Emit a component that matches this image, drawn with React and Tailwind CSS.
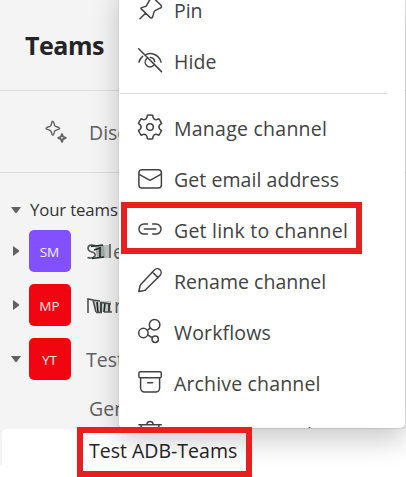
import React from "react";

const FONT = "font-['Open_Sans','Noto_Sans',sans-serif]";

const polar = (deg, r) => {
  const a = (deg * Math.PI) / 180;
  return `${(13 + r * Math.sin(a)).toFixed(2)} ${(13 - r * Math.cos(a)).toFixed(2)}`;
};

const gearPath =
  "M" +
  [0, 60, 120, 180, 240, 300]
    .map(
      (t) =>
        `${polar(t - 13, 12)} Q${polar(t, 12.2)} ${polar(t + 13, 12)} L${polar(t + 18, 9.9)} Q${polar(t + 30, 8)} ${polar(t + 42, 9.9)}`
    )
    .join(" L") +
  "Z";

function Icon({ children }) {
  return (
    <svg
      className="h-[26px] w-[26px] shrink-0 overflow-visible"
      viewBox="0 0 26 26"
      fill="none"
      stroke="#424242"
      strokeWidth="1.5"
      strokeLinecap="round"
      strokeLinejoin="round"
    >
      {children}
    </svg>
  );
}

const icons = {
  pin: (
    <Icon>
      <path d="M4.2 10.9 9.2 9.1 12 4.2Q14 0 17.5 2L24 8.2Q25.3 10.2 23 11.2L18.2 13.6Q17.4 14 17.1 14.9L15.6 19.9Q14.8 21.8 13.3 20.6L4.2 11.9Q3.6 11.2 4.2 10.9ZM3 21.7 8.7 16" />
    </Icon>
  ),
  hide: (
    <Icon>
      <path d="M1.7.8 24.5 23.6M9.2 6.4C11.5 5.5 14.5 5.3 17 6.3c3.6 1.3 6 4 7 7.8M2 14.1c.6-2.4 1.8-4.3 3.6-5.8M9.6 10.8a4.7 4.7 0 1 0 6.7 6.7M13.3 9.4a4.7 4.7 0 0 1 4.4 4.4" />
    </Icon>
  ),
  gear: (
    <Icon>
      <path d={gearPath} />
      <circle cx="13" cy="13" r="3.3" />
    </Icon>
  ),
  mail: (
    <Icon>
      <rect x="1.9" y="4.7" width="22.5" height="18.3" rx="3" />
      <path d="m2.2 9.3 10.8 6 10.8-6" />
    </Icon>
  ),
  link: (
    <Icon>
      <path d="M10.4 8H7a5 5 0 0 0 0 10.1h3.4M15.6 8H19a5 5 0 0 1 0 10.1h-3.4M7.4 13h11.4" />
    </Icon>
  ),
  pencil: (
    <Icon>
      <path d="M17.3 2.9a3.8 3.8 0 0 1 5.7 5.5L8.6 22.8Q8 23.3 7.2 23.5L1.8 24.6 3 19Q3.2 18.2 3.8 17.4L17.3 2.9ZM15.4 5l5.6 5.6" />
    </Icon>
  ),
  flow: (
    <Icon>
      <circle cx="17.6" cy="6.8" r="5.3" />
      <circle cx="6.4" cy="15" r="4.7" />
      <circle cx="18.2" cy="21.2" r="3.2" />
      <path d="m10.3 12.3 2.8-2.2M10.8 17l4.5 2.6" />
    </Icon>
  ),
  archive: (
    <Icon>
      <rect x="1.9" y="2.8" width="22.4" height="6" rx="1.4" />
      <path d="M3.6 8.8v10.3a4 4 0 0 0 4 4h11a4 4 0 0 0 4-4V8.8M10.7 13.7h4.9" />
    </Icon>
  ),
  trash: (
    <Icon>
      <path d="M1.9 4.8h22.3M9.9 4.5a3.1 3.1 0 0 1 6.2 0M4 5l1.8 17h14.4L22 5M10.5 9v10M15.5 9v10" />
    </Icon>
  ),
};

const topItems = [
  ["pin", "Pin", "leading-[28px] tracking-[-0.1px]"],
  ["hide", "Hide", "leading-[28px] tracking-[0.1px]"],
];

const items = [
  ["gear", "Manage channel", "leading-[30px] tracking-[0.25px]"],
  ["mail", "Get email address", "leading-[30px] tracking-[0.06px]"],
  ["link", "Get link to channel", "leading-[30px] tracking-[0.22px]"],
  ["pencil", "Rename channel", "leading-[30px] tracking-[0.03px]"],
  ["flow", "Workflows", "leading-[30px] tracking-[0.14px]"],
  ["archive", "Archive channel", "leading-[30px] tracking-[0.16px]"],
  ["trash", "Delete channel", "leading-[30px] tracking-[0.16px]"],
];

function MenuItem({ item: [icon, label, textStyle] }) {
  return (
    <div className="flex h-[51px] shrink-0 items-start gap-[11px] pl-[18px] pt-3">
      {icons[icon]}
      <span className={`whitespace-nowrap text-[19.5px] text-[#424242] ${textStyle}`}>{label}</span>
    </div>
  );
}

function Caret({ open }) {
  return (
    <svg className="h-[12px] w-[12px] shrink-0" viewBox="0 0 12 12" fill="#616161">
      {open ? <path d="M1 3h10L7 8.4q-1 1-2 0Z" /> : <path d="M3 1v10L8.6 7q1-1 0-2Z" />}
    </svg>
  );
}

function Team({ open, initials, color, children }) {
  return (
    <div className="flex h-[54px] shrink-0 items-center pl-[10px]">
      <Caret open={open} />
      <div
        className={`ml-[7px] flex h-[42px] w-[42px] shrink-0 items-center justify-center rounded-[5px] pr-[1px] pt-[2px] text-[13.5px] text-white/90 ${color}`}
      >
        {initials}
      </div>
      <div className="ml-[15px] flex items-center whitespace-nowrap pt-[2px] text-[19.5px] leading-[28px] text-[#616161]">
        {children}
      </div>
    </div>
  );
}

export default function App() {
  return (
    <div className={`relative h-[477px] w-[406px] overflow-hidden bg-white ${FONT}`}>
      <div className="flex h-[465px] flex-col bg-[#f4f4f4]">
        <div className="flex h-[91px] shrink-0 items-center border-b border-[#dcdcdc] pl-[25px]">
          <h1 className="text-[25px] font-bold leading-[36px] tracking-[-0.45px] text-[#242424]">Teams</h1>
        </div>
        <div className="flex h-[82px] shrink-0 items-center border-b border-[#dcdcdc] pl-[44px]">
          <svg
            className="h-[24px] w-[24px] shrink-0"
            viewBox="0 0 24 24"
            fill="none"
            stroke="#616161"
            strokeWidth="1.4"
            strokeLinejoin="round"
          >
            <path d="M8 1.8Q9 .6 9.7 2.4L10.6 5.2Q10.9 6 11.7 6.3L14.8 7.5Q16.4 8.4 14.8 9.2L11.7 10.3Q10.9 10.6 10.6 11.4L9.7 14.3Q8.9 16 8 14.3L7 11.4Q6.7 10.6 5.9 10.3L2.8 9.2Q1.2 8.4 2.8 7.5L5.9 6.3Q6.7 6 7 5.2Z" />
            <path d="M18 14 19.1 16.7 21.8 17.9 19.1 19.1 18 21.8 16.9 19.1 14.2 17.9 16.9 16.7Z" strokeWidth="1.8" />
          </svg>
          <span className="ml-[21px] pt-[2px] text-[19.5px] leading-[28px] text-[#616161]">Discover</span>
        </div>
        <div className="flex h-[51px] shrink-0 items-end pb-[1px] pl-[10px]">
          <div className="flex items-center">
            <Caret open />
            <span className="ml-[8px] whitespace-nowrap text-[16.8px] leading-[26px] tracking-[-0.15px] text-[#333]">
              Your teams
            </span>
          </div>
        </div>
        <Team initials="SM" color="bg-[#8250ff]">
          <svg className="h-[18px] w-[27px]" viewBox="0 0 27 18" fill="none" stroke="#555" strokeWidth="1.6">
            <path d="M9 2.5Q2 1 2 5q0 3 4 4 4 1 3 4-2 3-7.5 1.5" />
            <path d="M9 2h10v13h-8z" fill="#a3aaa7" stroke="none" />
            <path d="M5 3.5 17 2M8 7l6-2M14 4v10M6 15.5 18 14" stroke="#26302c" strokeWidth="1.7" />
            <path d="M18 2h5v13h-4z" fill="#c1c8c5" stroke="none" />
            <path d="M24 1v14" />
          </svg>
          es
        </Team>
        <Team initials="MP" color="bg-[#f00511]">
          <svg className="h-[18px] w-[28px]" viewBox="0 0 28 18" fill="none" stroke="#4b504e" strokeWidth="1.6">
            <path d="M7 4h18v11H10z" fill="#c6ccca" stroke="none" />
            <path d="M2 16V2l5 1 3 12M6 3l8 1" />
            <path d="M11 5l1 10M15 5v10M19 6l-1 9M23 7v8" stroke="#202724" />
            <path d="M15 5.5 25 7M10 15.5h6M18 15h8" />
          </svg>
          rs
        </Team>
        <Team open initials="YT" color="bg-[#f00511]">
          Test
        </Team>
        <div className="flex h-[43px] shrink-0 items-start pl-[89px] pt-[9px] text-[19.5px] leading-[28px] text-[#616161]">
          General
        </div>
        <div className="ml-[2px] flex h-[36px] shrink-0 items-end rounded-tl-[5px] bg-white pl-[87px]">
          <span className="whitespace-nowrap text-[19.5px] leading-[28px] text-[#242424]">
            Test ADB-Teams
          </span>
        </div>
      </div>

      <div className="absolute left-[119px] top-[-16px] h-[444px] w-[286px] rounded-[5px] shadow-[0_12px_28px_rgba(0,0,0,0.21),0_0_2px_rgba(0,0,0,0.16)]">
        <div className="flex h-full flex-col overflow-hidden rounded-[5px] bg-white pt-[1px]">
          {topItems.map((item) => (
            <MenuItem key={item[1]} item={item} />
          ))}
          <div className="mb-[8px] ml-[1px] mr-[18px] mt-[6px] h-px shrink-0 bg-[#dcdcdc]" />
          {items.map((item) => (
            <MenuItem key={item[1]} item={item} />
          ))}
        </div>
      </div>

      <div className="absolute left-[121px] top-[202px] h-[52px] w-[241px] border-[6px] border-[#e71f1f]" />
      <div className="absolute left-[77px] top-[427px] h-[50px] w-[175px] border-[6px] border-[#e71f1f]" />
    </div>
  );
}
